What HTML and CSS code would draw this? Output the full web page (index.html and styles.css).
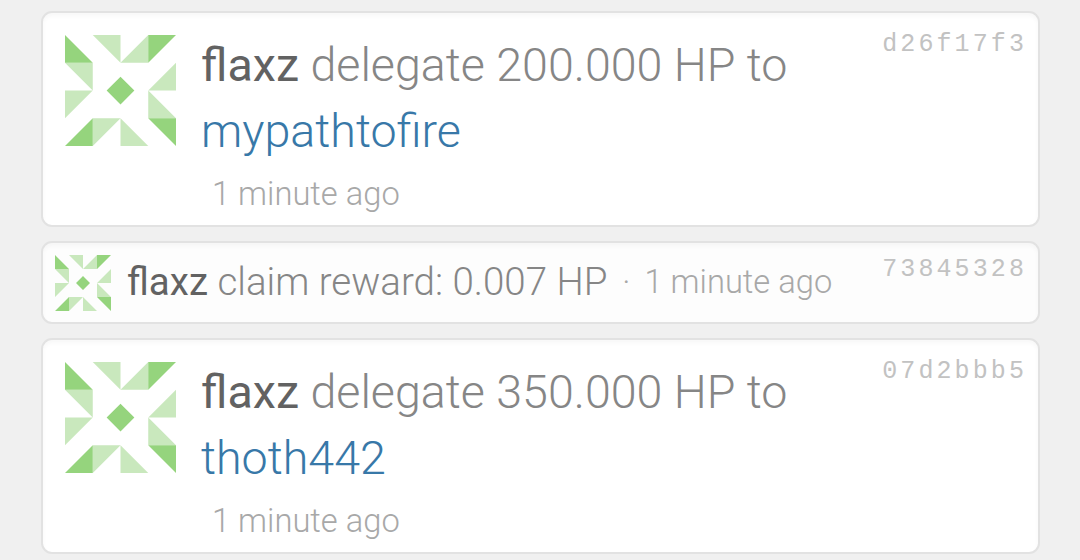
FILE: index.html
```html
<!DOCTYPE html>
<html lang="en">
<head>
  <meta charset="UTF-8">
  <meta name="viewport" content="width=device-width, initial-scale=1.0">
  <title>flaxz</title>
  <link rel="stylesheet" href="styles.css">
</head>
<body>

<!-- avatar shape, shared by all rows -->
<svg class="defs" width="0" height="0">
  <symbol id="avatar" viewBox="0 0 4 4">
    <path fill="#c9e8bd" d="M1 0h1v1zM2 1l1-1v1zM0 1h1v1zM0 2h1l-1 1zM1 3h1l-1 1zM2 3l1 1h-1zM3 2l1 1h-1zM4 1v1h-1z"/>
    <path fill="#95d47d" d="M0 0l1 1h-1zM3 0h1l-1 1zM1 3v1h-1zM3 3h1v1zM2 1.5l.5 .5-.5 .5-.5-.5z"/>
  </symbol>
</svg>

<div class="operations">
  <div class="op">
    <svg class="avatar"><use href="#avatar"/></svg>
    <div class="op-body">
      <div class="op-text"><a class="account">flaxz</a> delegate 200.000 HP to <a class="link">mypathtofire</a></div>
      <div class="time">1 minute ago</div>
    </div>
    <div class="tag">d26f17f3</div>
  </div>

  <div class="op op-mini">
    <svg class="avatar"><use href="#avatar"/></svg>
    <div class="op-body">
      <div class="op-text"><a class="account">flaxz</a> claim reward: 0.007 HP</div>
      <span class="dot">·</span>
      <div class="time">1 minute ago</div>
    </div>
    <div class="tag">73845328</div>
  </div>

  <div class="op">
    <svg class="avatar"><use href="#avatar"/></svg>
    <div class="op-body">
      <div class="op-text"><a class="account">flaxz</a> delegate 350.000 HP to <a class="link">thoth442</a></div>
      <div class="time">1 minute ago</div>
    </div>
    <div class="tag">07d2bbb5</div>
  </div>
</div>

</body>
</html>
```
FILE: styles.css
```css
* {
  box-sizing: border-box;
}
body {
  margin: 0;
  height: 560px;
  overflow: hidden;
  background-color: #f0f0f0;
  font-family: Roboto, sans-serif;
  font-weight: 300;
  color: #868686;
}
.defs {
  display: block;
}
.operations {
  display: flex;
  flex-direction: column;
  gap: 14px;
  padding: 11px 40px 0 41px;
}
.op {
  display: flex;
  align-items: flex-start;
  height: 216px;
  padding: 22px 11px 0 22px;
  background: #fff;
  border: 2px solid #e2e2e2;
  border-radius: 11px;
  box-shadow: inset 0 3px 4px rgba(0, 0, 0, 0.03);
}
.avatar {
  flex: none;
  width: 111px;
  height: 111px;
}
.op-body {
  width: 640px;
  margin-left: 25px;
  margin-top: -3px;
}
.op-text {
  font-size: 46.6px;
  line-height: 66px;
}
.account {
  font-weight: 450;
  color: #626262;
}
.link {
  color: #3878a8;
}
.time {
  margin-left: 11px;
  font-size: 32.7px;
  line-height: 60px;
  color: #a8a8a8;
}
.tag {
  margin-left: auto;
  margin-top: -7px;
  font-family: "Liberation Mono", monospace;
  font-size: 25px;
  line-height: 34px;
  letter-spacing: 3.1px;
  color: #c2c2c2;
}

/* one line rows */
.op-mini {
  height: 83px;
  padding: 12px 11px 0 12px;
  background: #fdfdfd;
}
.op-mini .avatar {
  width: 56px;
  height: 56px;
}
.op-mini .op-body {
  display: flex;
  width: auto;
  margin-left: 16px;
  margin-top: 0;
}
.op-mini .op-text {
  font-size: 38.5px;
  line-height: 54px;
}
.op-mini .time {
  margin-left: 14px;
  line-height: 54px;
}
.op-mini .tag {
  margin-top: -2px;
}
.dot {
  margin-left: 15px;
  font-size: 33px;
  line-height: 54px;
  color: #a8a8a8;
}
```
